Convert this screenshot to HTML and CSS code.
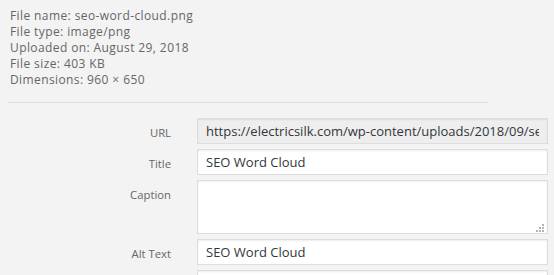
FILE: index.html
```html
<!DOCTYPE html>
<html lang="en">
<head>
    <meta charset="UTF-8">
    <title>Attachment Details</title>
    <link rel="stylesheet" href="styles.css">
</head>
<body>
    <div class="attachment-details">
        <div class="details">
            <div>File name: seo-word-cloud.png</div>
            <div>File type: image/png</div>
            <div>Uploaded on: August 29, 2018</div>
            <div>File size: 403 KB</div>
            <div>Dimensions: 960 &times; 650</div>
        </div>

        <div class="settings">
            <label class="setting">
                <span class="name">URL</span>
                <input type="text" class="field" value="https://electricsilk.com/wp-content/uploads/2018/09/seo-word-cloud.png" readonly>
            </label>
            <label class="setting">
                <span class="name">Title</span>
                <input type="text" class="field" value="SEO Word Cloud">
            </label>
            <label class="setting">
                <span class="name">Caption</span>
                <span class="textarea-wrap">
                    <textarea class="field caption"></textarea>
                    <!-- resize grip -->
                    <svg class="grip" width="9" height="9" viewBox="0 0 9 9">
                        <rect x="7" y="1" width="2" height="2"/>
                        <rect x="4" y="4" width="2" height="2"/>
                        <rect x="7" y="4" width="2" height="2"/>
                        <rect x="1" y="7" width="2" height="2"/>
                        <rect x="4" y="7" width="2" height="2"/>
                        <rect x="7" y="7" width="2" height="2"/>
                    </svg>
                </span>
            </label>
            <label class="setting">
                <span class="name">Alt Text</span>
                <input type="text" class="field" value="SEO Word Cloud">
            </label>
            <label class="setting">
                <span class="name"></span>
                <input type="text" class="field" value="">
            </label>
        </div>
    </div>
</body>
</html>
```

FILE: styles.css
```css
body {
    margin: 0;
    background-color: #f3f3f3;
    font-family: 'Open Sans', sans-serif;
    color: #666;
    overflow: hidden;
}

.attachment-details {
    padding: 8px 0 0 8px;
}

.details {
    width: 478px;
    padding: 0 0 14px 2px;
    border-bottom: 1px solid #ddd;
    font-size: 12px;
    letter-spacing: 0.4px;
    line-height: 16px;
}

.settings {
    display: flex;
    flex-direction: column;
    gap: 5px;
    margin-top: 15px;
}

.setting {
    display: flex;
    align-items: flex-start;
}

.name {
    flex-shrink: 0;
    width: 163px;
    margin-right: 26px;
    padding-top: 7px;
    text-align: right;
    font-size: 11.3px;
    line-height: 16px;
    color: #666;
}

.field {
    box-sizing: border-box;
    width: 351px;
    height: 26px;
    margin: 0;
    padding: 0 8px;
    border: 1px solid #ddd;
    box-shadow: inset 0 1px 2px rgba(0, 0, 0, 0.07);
    background-color: #fff;
    font-family: 'Open Sans', sans-serif;
    font-size: 13px;
    color: #32373c;
    outline: none;
}

.field[readonly] {
    background-color: #eee;
}

.textarea-wrap {
    position: relative;
    display: block;
}

.caption {
    display: block;
    height: 54px;
    resize: none;
}

.grip {
    position: absolute;
    right: 4px;
    bottom: 2px;
    fill: #b4b4b4;
}
```
